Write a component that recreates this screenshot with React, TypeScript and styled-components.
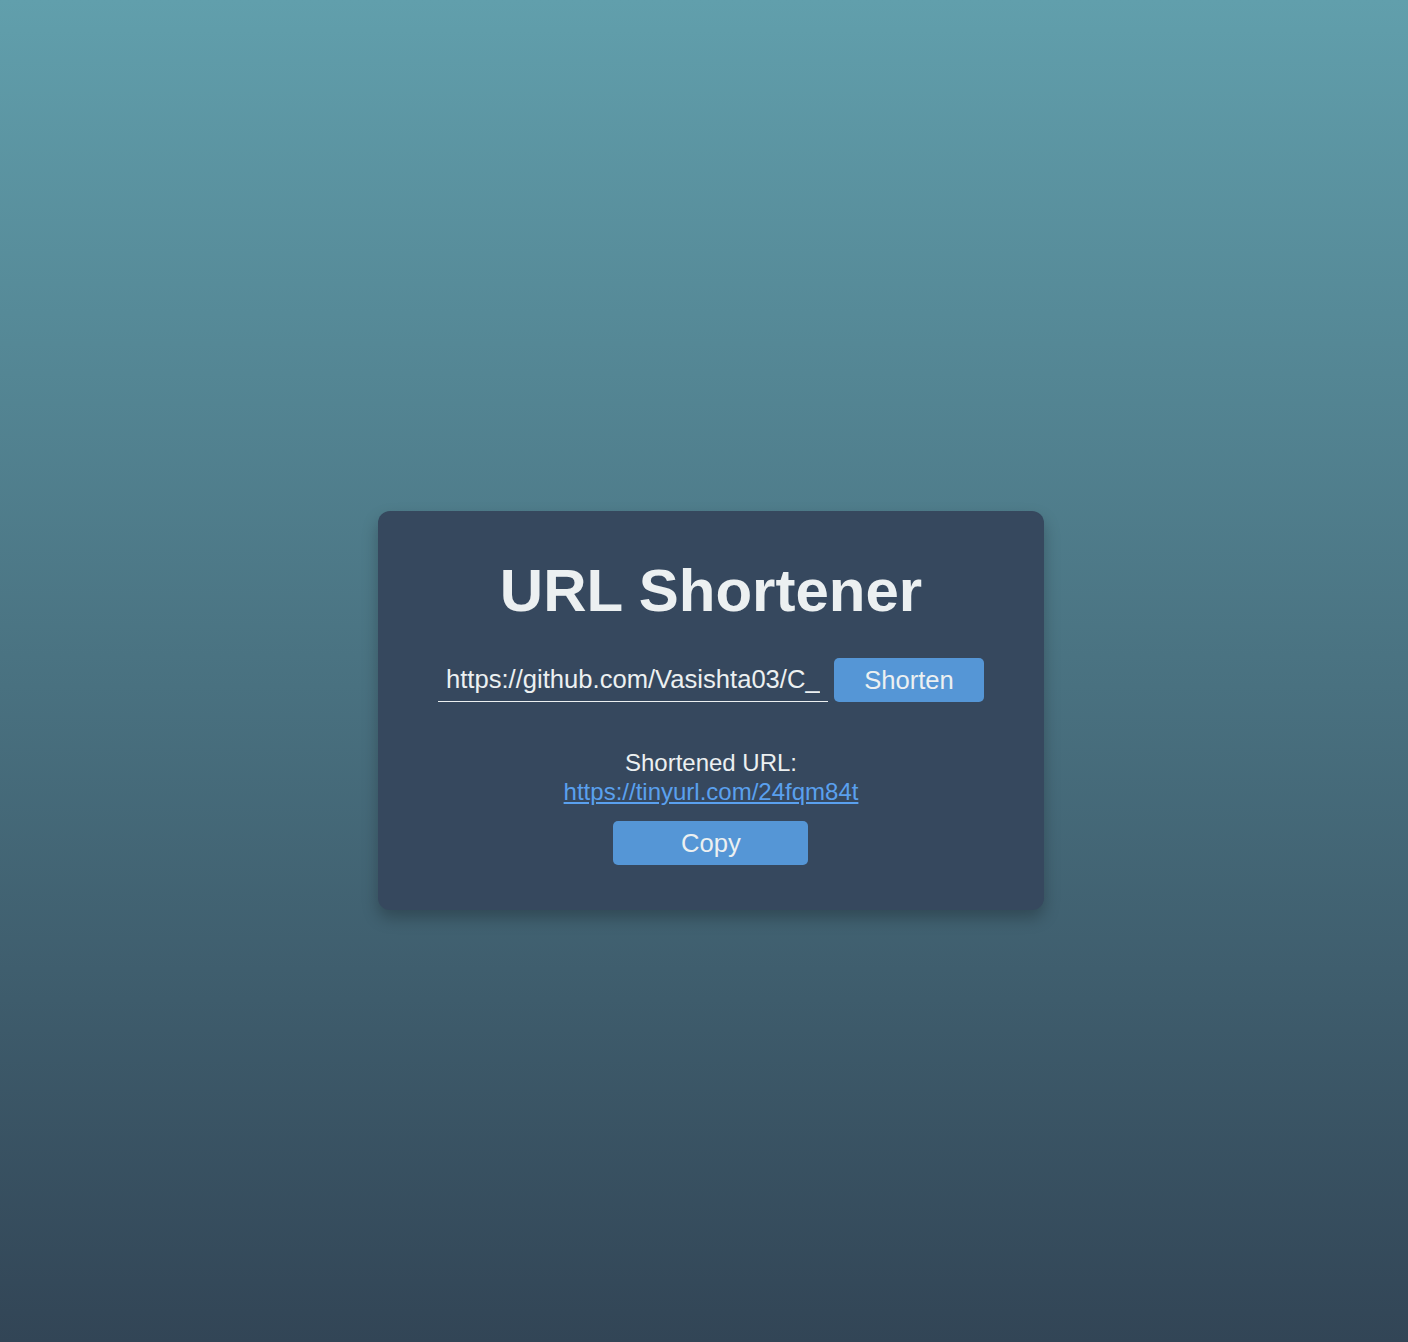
import React, { useState } from "react";
import styled, { createGlobalStyle } from "styled-components";

const GlobalStyle = createGlobalStyle`
  html, body { margin: 0; padding: 0; }
  body {
    font-family: "Liberation Sans", Arial, sans-serif;
    background: linear-gradient(to bottom, #619fac 0%, #324556 100%);
    min-height: 100vh;
  }
`;

const Page = styled.div`
  min-height: 1342px;
  box-sizing: border-box;
  display: flex;
  flex-direction: column;
  align-items: center;
  padding: 511px 0 0 14px;
`;

const Card = styled.div`
  width: 666px;
  height: 399px;
  box-sizing: border-box;
  background: #36485e;
  border-radius: 12px;
  box-shadow: 0 8px 16px rgba(0, 0, 0, 0.25);
  padding: 43px 0 0;
  display: flex;
  flex-direction: column;
  align-items: center;
  color: #ecf0f1;
`;

const Title = styled.h1`
  margin: 0;
  font-size: 60px;
  font-weight: 700;
  line-height: 74px;
  color: #ecf0f1;
`;

const Row = styled.div`
  display: flex;
  gap: 6px;
  margin-top: 30px;
`;

const Input = styled.input`
  width: 390px;
  height: 44px;
  box-sizing: border-box;
  padding: 0 8px;
  background: transparent;
  border: none;
  border-bottom: 1px solid #ecf0f1;
  color: #ecf0f1;
  font-family: "Liberation Sans", Arial, sans-serif;
  font-size: 25.6px;
  outline: none;
`;

const Button = styled.button<{ $w: number }>`
  width: ${(p) => p.$w}px;
  height: 44px;
  border: none;
  border-radius: 5px;
  background: #5596d6;
  color: #ecf0f1;
  font-family: "Liberation Sans", Arial, sans-serif;
  font-size: 25.6px;
  cursor: pointer;
`;

const Result = styled.div`
  margin-top: 46px;
  display: flex;
  flex-direction: column;
  align-items: center;
  font-size: 24px;
  line-height: 29px;
`;

const Link = styled.a`
  color: #5aa0ee;
  text-decoration: underline;
  margin-bottom: 15px;
`;

export default function App() {
  const [url, setUrl] = useState("https://github.com/Vasishta03/C_Programming");
  return (
    <>
      <GlobalStyle />
      <Page>
        <Card>
          <Title>URL Shortener</Title>
          <Row>
            <Input value={url} onChange={(e) => setUrl(e.target.value)} />
            <Button $w={150}>Shorten</Button>
          </Row>
          <Result>
            <span>Shortened URL:</span>
            <Link href="#">https://tinyurl.com/24fqm84t</Link>
            <Button $w={195}>Copy</Button>
          </Result>
        </Card>
      </Page>
    </>
  );
}
